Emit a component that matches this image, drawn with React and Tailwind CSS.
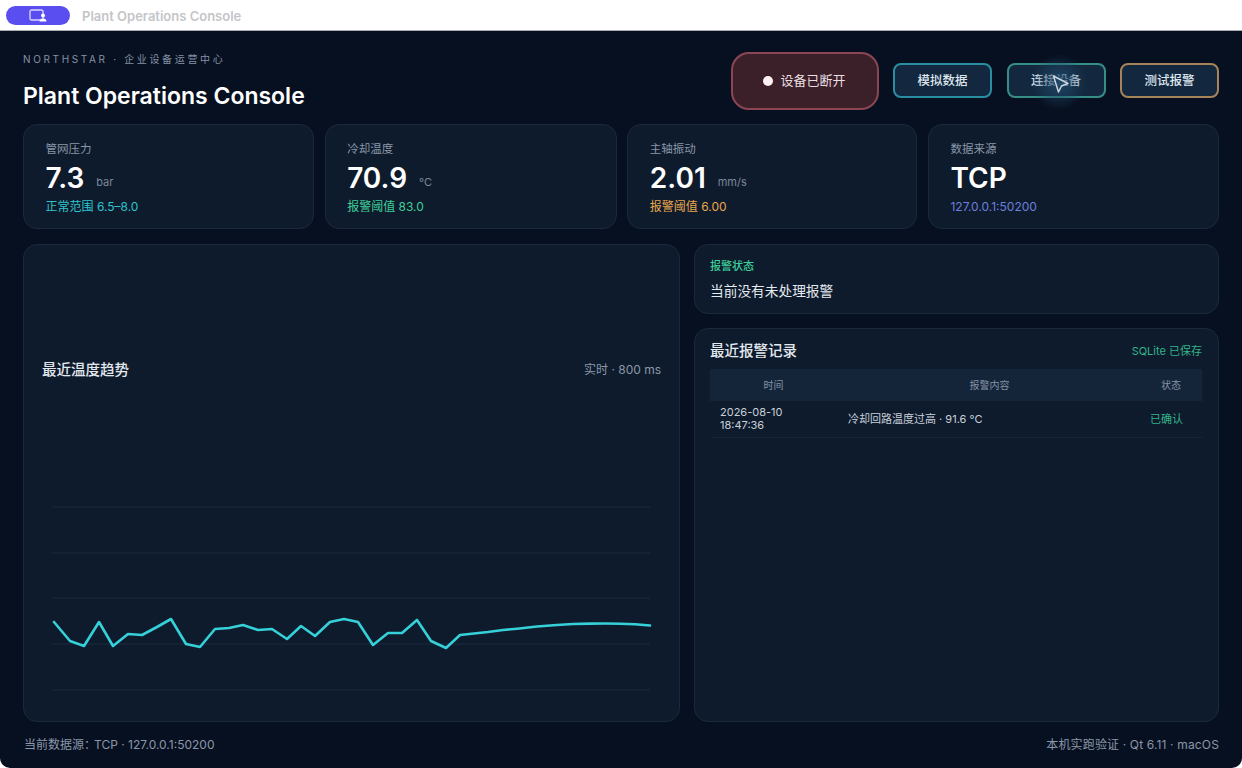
const metrics = [
  { label: '管网压力', value: '7.3', unit: 'bar', note: '正常范围 6.5–8.0', color: 'text-[#2fc4cc]', w: 'w-[291px]' },
  { label: '冷却温度', value: '70.9', unit: '°C', note: '报警阈值 83.0', color: 'text-[#3fcf9a]', w: 'w-[292px]' },
  { label: '主轴振动', value: '2.01', unit: 'mm/s', note: '报警阈值 6.00', color: 'text-[#eba74c]', w: 'w-[290px]' },
  { label: '数据来源', value: 'TCP', unit: '', note: '127.0.0.1:50200', color: 'text-[#6b7fdc]', w: 'w-[291px]' },
]

const points = [
  [54, 622], [70, 641], [84, 646], [99, 622], [113, 646], [128, 634], [142, 635], [157, 627], [171, 619],
  [186, 644], [200, 647], [215, 629], [229, 628], [243, 625], [258, 630], [272, 629], [287, 639], [301, 626],
  [315, 636], [330, 622], [344, 619], [358, 622], [373, 645], [388, 633], [402, 633], [417, 620], [431, 641],
  [446, 648], [460, 635], [488, 632], [503, 630], [517, 628.7], [537, 626.5], [557, 625], [573, 624],
  [590, 623.6], [605, 623.5], [620, 623.7], [635, 624.3], [650, 625.5],
]

function Metric({ m }) {
  return (
    <div className={`${m.w} h-[105px] shrink-0 rounded-[14px] border border-[#1a2a3d] bg-[#0e1b2c] pl-[21.5px] pt-[16px]`}>
      <div className="text-[11.5px] leading-[16px] text-[#8a97a8]">{m.label}</div>
      <div className="mt-[3px] flex h-[36px] items-center">
        <span className="text-[28px] font-semibold leading-[36px] text-white">{m.value}</span>
        {m.unit && <span className="ml-[12px] mt-[9px] text-[11px] text-[#7b8797]">{m.unit}</span>}
      </div>
      <div className={`mt-[3px] text-[12px] leading-[16px] ${m.color}`}>{m.note}</div>
    </div>
  )
}

function Btn({ border, children, glow }) {
  return (
    <button className={`relative mb-[1px] h-[35px] w-[99px] rounded-[8px] border-2 ${border} bg-[#13283f] text-[12.5px] font-medium text-[#dfe6ee]`}>
      <span className="relative top-[1px]">{children}</span>
      {glow && <span className="absolute left-[22px] top-[-11px] h-[56px] w-[56px] rounded-full bg-[radial-gradient(closest-side,rgba(32,72,104,0.92),rgba(32,72,104,0.45)_50%,rgba(32,72,104,0))]" />}
      {glow && (
        <svg className="absolute left-[42px] top-[8px]" width="20" height="20" viewBox="0 0 20 20" fill="none">
          <path d="M2.5 3 L17 10.5 L10.5 13 L7.5 19 Z" fill="#1c3f5c" fillOpacity="0.6" stroke="#c9d3de" strokeWidth="1.5" strokeLinejoin="round" />
        </svg>
      )}
    </button>
  )
}

export default function App() {
  return (
    <div className="flex h-screen w-full flex-col overflow-hidden bg-white font-['Inter','Noto_Sans_CJK_SC',sans-serif]">
      <div className="flex h-[31px] shrink-0 items-center border-b border-[#a9acb0] pl-[6px]">
        <div className="mt-[1px] flex h-[19px] w-[64px] items-center justify-center rounded-full bg-[#5b4ef0]">
          <svg width="18" height="13" viewBox="0 0 18 13" fill="none">
            <rect x="1" y="1" width="13" height="10" rx="1.5" stroke="#dcd9ff" strokeWidth="1.3" />
            <circle cx="14" cy="6.5" r="2" fill="#fff" />
            <path d="M10.5 12.5c0-2 1.5-3 3.5-3s3.5 1 3.5 3z" fill="#fff" />
          </svg>
        </div>
        <span className="ml-[12px] mt-[3px] text-[13px] font-semibold text-[#c4c5c9]">Plant Operations Console</span>
      </div>

      <div className="flex flex-1 flex-col rounded-b-[10px] bg-[#071020] px-[23px]">
        <div className="flex h-[93px] shrink-0 items-start justify-between">
          <div className="pt-[21px]">
            <div className="text-[10px] leading-[14px] tracking-[2.65px] text-[#8492a6]">NORTHSTAR · 企业设备运营中心</div>
            <h1 className="mt-[14px] text-[23px] font-semibold leading-[32px] text-white">Plant Operations Console</h1>
          </div>
          <div className="flex items-center gap-[14.5px] pt-[21px]">
            <div className="flex h-[58px] w-[148px] items-center justify-center gap-[7px] rounded-[18px] border-2 border-[#8c4653] bg-[#3c2029] text-[13px] text-[#e9dfe1]">
              <span className="h-[10px] w-[10px] rounded-full bg-[#fff0f2]" />
              设备已断开
            </div>
            <Btn border="border-[#2a8ea2]">模拟数据</Btn>
            <Btn border="border-[#358f86]" glow>连接设备</Btn>
            <Btn border="border-[#a5845a]">测试报警</Btn>
          </div>
        </div>

        <div className="flex shrink-0 justify-between">
          {metrics.map((m) => <Metric key={m.label} m={m} />)}
        </div>

        <div className="mt-[15px] flex h-[478px] shrink-0 gap-[14px]">
          <div className="relative w-[657px] shrink-0 rounded-[14px] border border-[#1a2a3d] bg-[#0e1b2c]">
            <div className="flex items-center justify-between px-[18px] pt-[115px]">
              <span className="text-[14.5px] font-medium leading-[20px] text-[#e4e9ef]">最近温度趋势</span>
              <span className="text-[12px] leading-[20px] text-[#8a97a8]">实时 · 800 ms</span>
            </div>
            <svg className="absolute left-0 top-0" width="655" height="476" viewBox="24 245 655 476" fill="none">
              {[507, 553, 598, 644, 690].map((y) => (
                <line key={y} x1="52" x2="650" y1={y} y2={y} stroke="#1a2b3f" strokeWidth="1" />
              ))}
              <polyline points={points.map((p) => p.join(',')).join(' ')} stroke="#35d0d8" strokeWidth="2.6" strokeLinejoin="round" strokeLinecap="round" />
            </svg>
          </div>

          <div className="flex min-w-0 flex-1 flex-col gap-[14px]">
            <div className="h-[70px] shrink-0 rounded-[14px] border border-[#1a2a3d] bg-[#0e1b2c] pl-[15px] pt-[13px]">
              <div className="text-[11px] font-medium leading-[16px] text-[#3fcf9a]">报警状态</div>
              <div className="mt-[7px] text-[13.7px] leading-[20px] text-[#e4e9ef]">当前没有未处理报警</div>
            </div>
            <div className="flex-1 rounded-[14px] border border-[#1a2a3d] bg-[#0e1b2c] px-[16px] pt-[12px]">
              <div className="-ml-px flex h-[20px] items-center justify-between">
                <span className="text-[14.5px] font-medium text-[#e4e9ef]">最近报警记录</span>
                <span className="text-[11px] text-[#32b58a]">SQLite 已保存</span>
              </div>
              <div className="mt-[8px] -ml-px flex h-[32px] items-center bg-[#14253a] text-[10px] text-[#8593a5]">
                <span className="w-[127px] text-center">时间</span>
                <span className="ml-[2px] flex-1 text-center">报警内容</span>
                <span className="w-[62px] text-center">状态</span>
              </div>
              <div className="flex h-[37px] items-center border-b border-[#15263a] text-[11px] text-[#c8d0da]">
                <div className="w-[137px] pl-[9px] leading-[13px]">2026-08-10<br />18:47:36</div>
                <div className="flex-1">冷却回路温度过高 · 91.6 °C</div>
                <div className="w-[52px] text-[11px] text-[#32b58a]">已确认</div>
              </div>
            </div>
          </div>
        </div>

        <div className="mb-[1px] flex flex-1 items-center justify-between text-[12px] text-[#8a97a8]">
          <span className="ml-px">当前数据源：<span className="-ml-[2px]">TCP · 127.0.0.1:50200</span></span>
          <span className="tracking-[0.15px]">本机实跑验证 · Qt 6.11 · macOS</span>
        </div>
      </div>
    </div>
  )
}
